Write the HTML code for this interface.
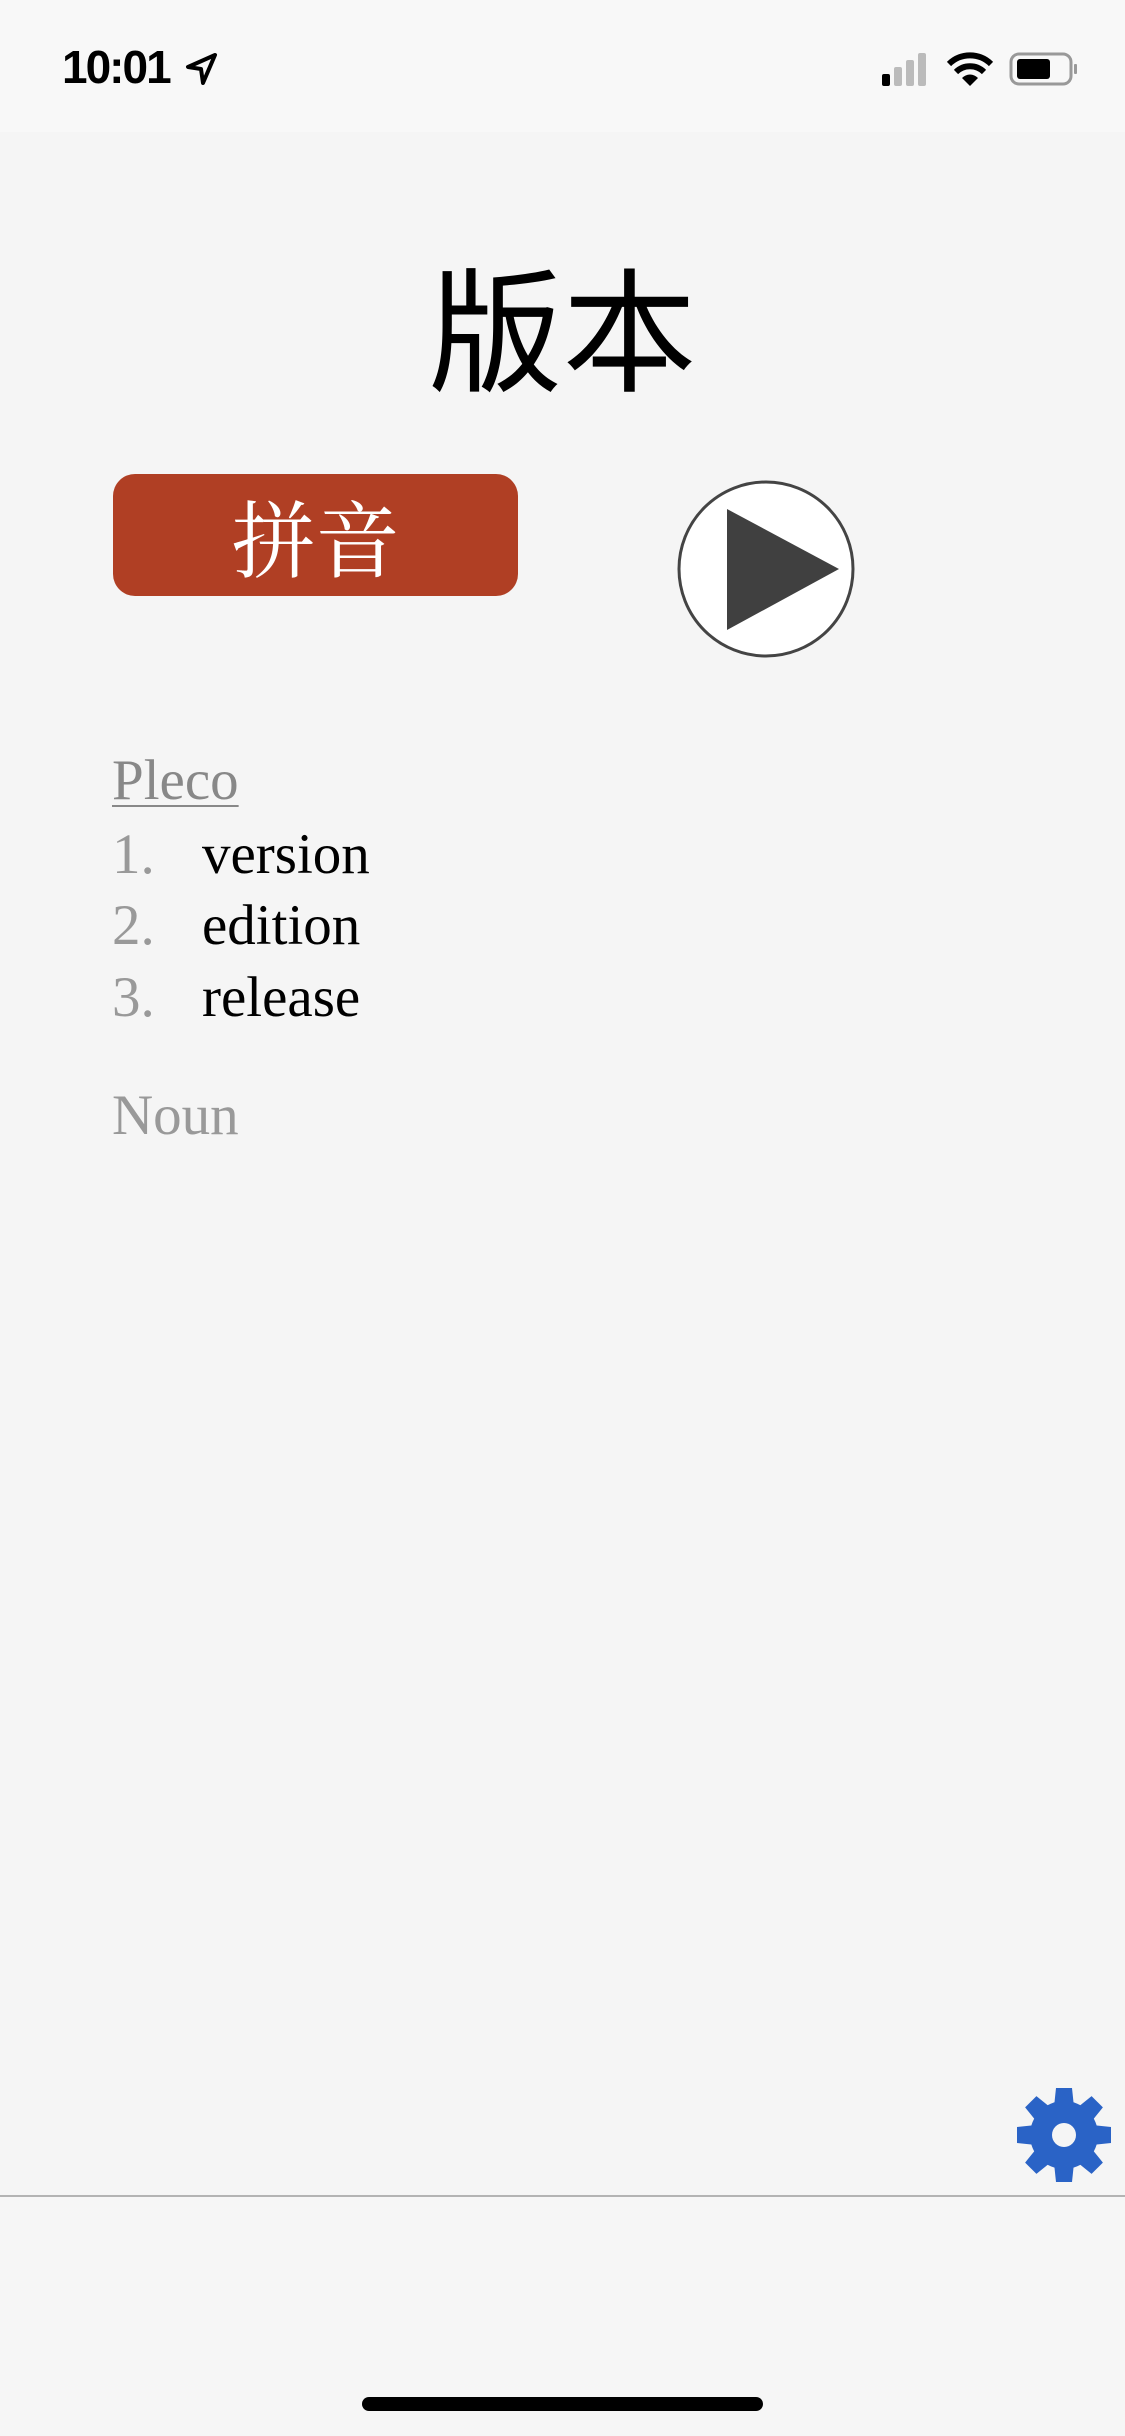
<!DOCTYPE html>
<html><head><meta charset="utf-8"><style>
html,body{margin:0;padding:0}
body{width:1125px;height:2436px;background:#f5f5f5;position:relative;overflow:hidden;font-family:"Liberation Serif","Noto Serif CJK SC",serif}
.abs{position:absolute}
#status{left:0;top:0;width:1125px;height:132px;background:#f8f8f8}
#time{left:62px;top:40px;font:600 46px "Liberation Sans",sans-serif;color:#000;letter-spacing:-2px}
#title{left:0;width:1125px;top:256px;text-align:center;font-size:134px;line-height:160px;font-family:"Liberation Sans","Noto Sans CJK SC",sans-serif;color:#000}
#btn{left:113px;top:474px;width:405px;height:122px;background:#b03f24;border-radius:22px;color:#fff;text-align:center;font-size:84px;line-height:140px;font-family:"Liberation Serif","Noto Serif CJK SC",serif;overflow:hidden}
.t{font-size:57px;line-height:72px;color:#000}
.n{color:#999;display:inline-block;width:90px}
</style></head><body>
<div id="status" class="abs"></div>
<div id="time" class="abs">10:01</div>
<svg class="abs" style="left:185px;top:52px" width="34" height="34" viewBox="0 0 34 34"><path d="M30 3 L3 15 L16 17 L18 31 Z" fill="none" stroke="#000" stroke-width="4" stroke-linejoin="round"/></svg>
<svg class="abs" style="left:878px;top:50px" width="200" height="40" viewBox="0 0 200 40">
<rect x="4" y="24" width="8" height="12" rx="2" fill="#000"/>
<rect x="16" y="17" width="8" height="19" rx="2" fill="#bbb"/>
<rect x="28" y="10" width="8" height="26" rx="2" fill="#bbb"/>
<rect x="40" y="3" width="8" height="33" rx="2" fill="#bbb"/>
<path d="M92 36 L100 28 A11 11 0 0 0 84 28 Z" fill="#000"/>
<path d="M78 22 A20 20 0 0 1 106 22" stroke="#000" stroke-width="6" fill="none"/>
<path d="M71 14 A30 30 0 0 1 113 14" stroke="#000" stroke-width="6" fill="none"/>
<rect x="133" y="4" width="60" height="30" rx="8" fill="none" stroke="#999" stroke-width="3"/>
<rect x="139" y="9" width="33" height="20" rx="3" fill="#000"/>
<rect x="196" y="14" width="3" height="10" rx="1" fill="#999"/>
</svg>
<div id="title" class="abs">版本</div>
<div id="btn" class="abs">拼音</div>
<svg class="abs" style="left:676px;top:479px" width="180" height="180" viewBox="0 0 180 180">
<circle cx="90" cy="90" r="87" fill="#fff" stroke="#444" stroke-width="3"/>
<path d="M51 30 L163 90 L51 151 Z" fill="#404040"/>
</svg>
<div class="abs t" style="left:112px;top:745px;color:#888;text-decoration:underline;text-decoration-thickness:2px;text-underline-offset:6px">Pleco</div>
<div class="abs t" style="left:112px;top:819px"><span class="n">1.</span>version</div>
<div class="abs t" style="left:112px;top:890px"><span class="n">2.</span>edition</div>
<div class="abs t" style="left:112px;top:962px"><span class="n">3.</span>release</div>
<div class="abs t" style="left:112px;top:1080px;color:#999">Noun</div>
<svg class="abs" style="left:1016px;top:2087px" width="96" height="96" viewBox="-48 -48 96 96">
<g fill="#2a63c6">
<circle r="34"/>
<g id="tooth"><path d="M-8 -47 L8 -47 L10 -28 L-10 -28 Z"/></g>
<use href="#tooth" transform="rotate(45)"/><use href="#tooth" transform="rotate(90)"/><use href="#tooth" transform="rotate(135)"/>
<use href="#tooth" transform="rotate(180)"/><use href="#tooth" transform="rotate(225)"/><use href="#tooth" transform="rotate(270)"/><use href="#tooth" transform="rotate(315)"/>
</g>
<circle r="12" fill="#f5f5f5"/>
</svg>
<div class="abs" style="left:0;top:2195px;width:1125px;height:2px;background:#b3b3b3"></div>
<div class="abs" style="left:0;top:2197px;width:1125px;height:239px;background:#f6f6f6"></div>
<div class="abs" style="left:362px;top:2397px;width:401px;height:14px;border-radius:7px;background:#000"></div>
</body></html>
